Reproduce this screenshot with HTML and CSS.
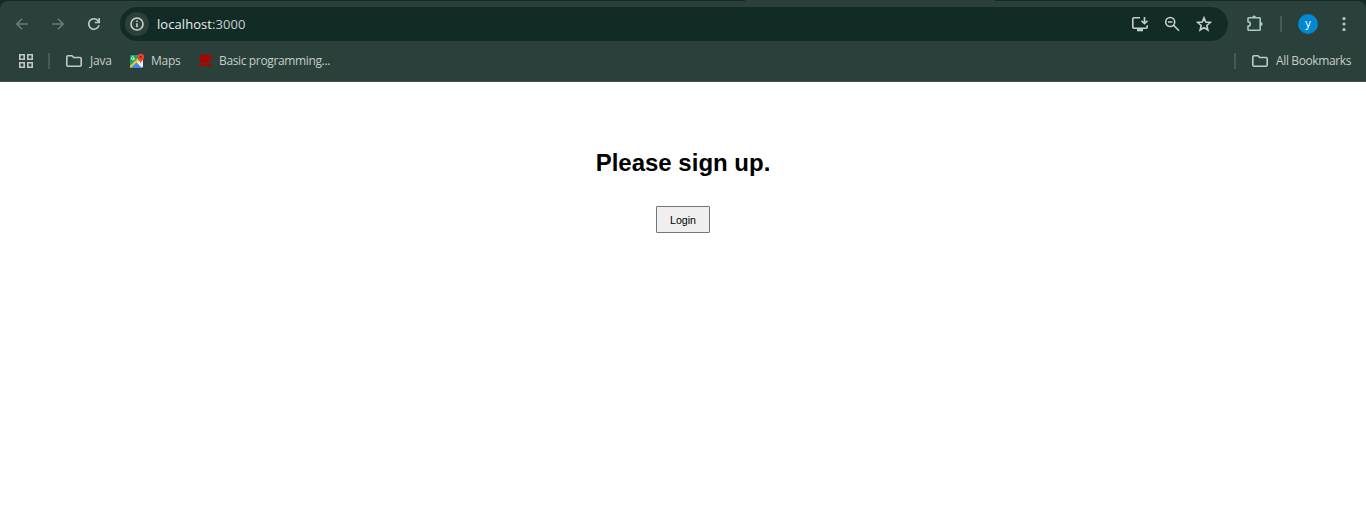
FILE: index.html
```html
<!DOCTYPE html>
<html lang="en">
<head>
<meta charset="utf-8">
<title>localhost:3000</title>
<link rel="stylesheet" href="styles.css">
</head>
<body>
<div class="frame">
  <header class="chrome">
    <div class="tab-edge"></div>
    <div class="toolbar">
      <svg class="icon nav-back dim" width="16" height="16" viewBox="0 0 16 16"><path d="M14 8H3M8 2.700 2.700 8 8 13.300"/></svg>
      <svg class="icon nav-forward dim" width="16" height="16" viewBox="0 0 16 16"><path d="M2 8h11M8 2.700 13.300 8 8 13.300"/></svg>
      <svg class="icon nav-reload" width="16" height="16" viewBox="0 0 16 16"><path d="M13 9.100A5.200 5.200 0 1 1 11.900 4.600L13 5.800M13.200 2v4.500H8.800"/></svg>
      <div class="omnibox">
        <span class="site-info"><svg class="icon bright" width="14" height="14" viewBox="0 0 14 14"><circle cx="7" cy="7" r="6"/><path d="M7 6.300v4M7 3.500v1.600"/></svg></span>
        <span class="url">localhost<span class="port">:3000</span></span>
        <span class="actions">
          <svg class="icon bright install" width="18" height="16" viewBox="0 0 18 16"><path d="M9 1.800H3Q1.800 1.800 1.800 3V11Q1.800 12.200 3 12.200H15Q16.200 12.200 16.200 11V9.300M13.500 1V7M10.500 4.700 13.500 7.700l3-3"/><path class="solid" d="M6 12.500h6v2.800H6z"/></svg>
          <svg class="icon bright" width="16" height="16" viewBox="0 0 16 16"><circle cx="6.200" cy="6" r="4.500"/><path d="M9.500 9.300 15 14.800M4 6h4.400"/></svg>
          <svg class="icon bright" width="16" height="16" viewBox="0 0 16 16"><path d="m8 1.900 1.700 4.200 4.600.4-3.500 3 1.100 4.500L8 11.600 4.100 14l1.100-4.500-3.500-3 4.600-.4z"/></svg>
        </span>
      </div>
      <svg class="icon extensions" width="18" height="18" viewBox="0 0 18 18"><path d="M2.800 2.800H13.500Q14.200 2.800 14.200 3.500V14.500Q14.200 15.200 13.500 15.200H2.800Q2 15.200 2 14.500V11.400Q4.300 11 4.300 9T2 6.600V3.500Q2 2.800 2.800 2.800Z"/><path class="solid" d="M6.200 2.500a1.900 1.900 0 0 1 3.800 0zM14.700 7.100a1.900 1.900 0 0 1 0 3.800z"/></svg>
      <span class="divider tool-divider"></span>
      <span class="avatar">y</span>
      <svg class="menu" width="6" height="16" viewBox="0 0 6 16"><circle cx="3" cy="2.500" r="1.600"/><circle cx="3" cy="8" r="1.600"/><circle cx="3" cy="13.500" r="1.600"/></svg>
    </div>
    <nav class="bookmarks">
      <svg class="icon apps" width="14" height="14" viewBox="0 0 14 14"><path d="M.8.8h4.400v4.400H.8zM8.800.8h4.400v4.400H8.800zM.8 8.800h4.400v4.400H.8zM8.800 8.800h4.400v4.400H8.800z"/></svg>
      <span class="divider"></span>
      <svg class="icon folder" width="16" height="14" viewBox="0 0 16 14"><path d="M2 1.800H6L7.700 3.500H14Q15.200 3.500 15.200 4.700V11Q15.200 12.200 14 12.200H2Q.8 12.200.8 11V3Q.8 1.800 2 1.800Z"/></svg>
      <span class="label java">Java</span>
      <svg class="maps-icon" width="16" height="16" viewBox="0 0 16 16">
        <path fill="#1fa463" d="M1 3Q1 2 2 2h10v4L2 15Q1 15 1 14z"/>
        <path fill="#eceff1" d="M11 5h3v9l-2 1-5-6z"/>
        <path fill="#fbc02d" d="m1 13 9-9 2 2-10 9Q1 15 1 14z"/>
        <path fill="#4285f4" d="m2 15 5.500-5.500L13 15z"/>
        <path fill="none" stroke="#e7f4ec" d="M5 4.200A1.500 1.500 0 1 0 5.500 5.500H4.300"/>
        <path fill="#ea4335" d="M11.700 11c0-3-3.300-3.700-3.300-7a3.300 3.300 0 0 1 6.700 0c0 3.300-3.400 4-3.400 7"/>
        <circle cx="11.700" cy="4" r="1.200" fill="#9c211a"/>
      </svg>
      <span class="label maps">Maps</span>
      <svg class="cup" width="15" height="12" viewBox="0 0 15 12"><path fill="#b00000" d="M2 0h10.800Q14.300 0 14.300 1.500v2.300Q14.300 5.300 12.800 5.300H11.500V6.500Q11.500 8 10 8H3.500Q2 8 2 6.500zM11.500 1.300V4h1.500V1.300zM0 9.300h14L13 11H1.200z"/></svg>
      <span class="label basic">Basic programming...</span>
      <span class="divider end-divider"></span>
      <svg class="icon folder" width="16" height="14" viewBox="0 0 16 14"><path d="M2 1.800H6L7.700 3.500H14Q15.200 3.500 15.200 4.700V11Q15.200 12.200 14 12.200H2Q.8 12.200.8 11V3Q.8 1.800 2 1.800Z"/></svg>
      <span class="label all">All Bookmarks</span>
    </nav>
  </header>
  <main class="page">
    <h1 class="title">Please sign up.</h1>
    <button class="login" type="button">Login</button>
  </main>
</div>
</body>
</html>
```
FILE: styles.css
```css
* { box-sizing: border-box; }
body { margin: 0; background: #fff; font-family: "Liberation Sans", Arial, sans-serif; }
.frame { display: flex; flex-direction: column; height: 506px; overflow: hidden; }
.chrome { height: 82px; background: linear-gradient(#132b26 0 10px, #2b403b 10px); font-family: "Open Sans", "Segoe UI", sans-serif; }
.tab-edge { width: 250px; height: 1px; margin-left: 745px; background: #2b403b; }
.toolbar { display: flex; align-items: center; height: 46px; padding-left: 14px; background: #2b403b; border-radius: 8px 8px 0 0; }
.icon { display: block; flex: none; fill: none; stroke: #b9cbc5; stroke-width: 1.6; }
.icon .solid { fill: #b9cbc5; stroke: none; }
.icon.bright { stroke: #c7d2ce; }
.icon.dim { stroke: #687a75; }
.nav-forward { margin-left: 20px; }
.nav-reload { margin-left: 20px; }
.omnibox { display: flex; align-items: center; width: 1108px; height: 34px; margin-left: 18px; padding: 0 16px 0 5px; border-radius: 17px; background: #132b26; }
.site-info { display: flex; align-items: center; justify-content: center; width: 24px; height: 24px; border-radius: 50%; background: #2b403b; }
.url { margin-left: 8px; font-size: 13px; line-height: 18px; letter-spacing: .06px; color: #e8efec; }
.port { color: #c5d0cc; }
.actions { display: flex; align-items: center; gap: 16px; margin-left: auto; }
.actions .install { margin-right: -1px; }
.extensions { margin-left: 18px; stroke: #a9cabf; }
.extensions .solid { fill: #a9cabf; }
.divider { flex: none; width: 2px; height: 16px; background: #455a54; }
.tool-divider { margin-left: 16px; }
.avatar { width: 20px; height: 20px; margin-left: 16px; border-radius: 50%; background: #0288d1; color: #fff; font-size: 11px; line-height: 18px; text-align: center; }
.menu { margin-left: 23px; fill: #b9cbc5; }
.bookmarks { display: flex; align-items: center; height: 35px; padding: 0 15px 6px 19px; background: #2b403b; border-bottom: 1px solid #40504c; }
.bookmarks .icon { stroke: #c1c9c6; }
.bookmarks .apps + .divider { margin: 0 16px 0 15px; }
.label { flex: none; font-size: 12px; line-height: 16px; color: #c6ceca; white-space: nowrap; }
.folder + .label { margin-left: 8px; }
.java { width: 23px; letter-spacing: -.2px; }
.maps-icon { margin-left: 16px; }
.maps { width: 29px; margin-left: 6px; letter-spacing: -.25px; }
.cup { margin-left: 18px; }
.basic { margin-left: 6px; letter-spacing: -.36px; }
.end-divider { margin: 0 16px 0 auto; }
.all { width: 75px; letter-spacing: -.37px; }
.page { display: flex; flex-direction: column; align-items: center; flex: 1; padding-top: 67px; }
.title { margin: 0; font-size: 24px; line-height: 28px; font-weight: 700; color: #000; }
.login { width: 54px; height: 27px; margin-top: 29px; padding: 0; border: 1px solid #767676; border-radius: 1px; background: #efefef; color: #000; font: 10.667px/12px "Liberation Sans", Arial, sans-serif; }
```
